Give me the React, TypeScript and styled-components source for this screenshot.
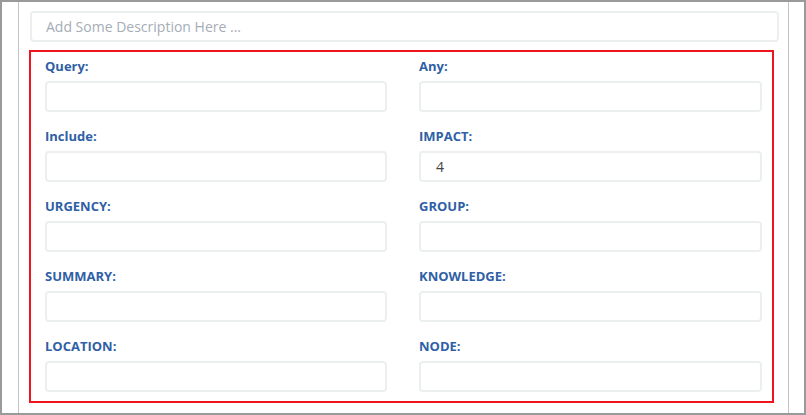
import styled, { createGlobalStyle } from "styled-components";

const GlobalStyle = createGlobalStyle`
    html, body {
        margin: 0;
        padding: 0;
        background: #ffffff;
    }
    * {
        box-sizing: border-box;
    }
`

const Frame = styled.div`
    width: 806px;
    height: 415px;
    border: 2px solid #9a9a9a;
    padding-left: 16px;
    padding-right: 15px;
    background: #ffffff;
    overflow: hidden;
    font-family: "Open Sans", "Liberation Sans", sans-serif;
`

const Panel = styled.div`
    height: 100%;
    border-left: 1px solid #c4c4c4;
    border-right: 1px solid #c4c4c4;
    padding: 0 10px 0 10px;
    display: flex;
    flex-direction: column;
`

// label of the description box, scrolled mostly out of view
const CutLabel = styled.div`
    height: 8px;
    margin-top: -17px;
    margin-left: 2px;
    font-size: 13px;
    font-weight: 700;
    line-height: 16px;
    color: #2f3b4a;
`

const DescriptionInput = styled.input`
    height: 31px;
    width: 100%;
    margin-top: 18px;
    margin-left: 1px;
    border: 2px solid #eceff0;
    border-radius: 4px;
    padding: 0 14px;
    font-family: "Open Sans", "Liberation Sans", sans-serif;
    font-size: 14px;
    color: #444;
    outline: none;

    &::placeholder {
        color: #a5adb6;
    }
`

const RedBox = styled.div`
    margin-top: 8px;
    margin-right: 4px;
    border: 2px solid #f0141e;
    padding: 6px 9px 9px 14px;
    display: grid;
    grid-template-columns: 342px 343px;
    column-gap: 32px;
    row-gap: 16px;
`

const Field = styled.div`
    display: flex;
    flex-direction: column;
`

const Label = styled.label`
    font-size: 13px;
    font-weight: 700;
    line-height: 16px;
    color: #2f5fa6;
    margin-bottom: 7px;
`

const TextInput = styled.input`
    height: 31px;
    width: 100%;
    border: 2px solid #eceff0;
    border-radius: 4px;
    padding: 0 15px;
    font-family: "Open Sans", "Liberation Sans", sans-serif;
    font-size: 14px;
    color: #444;
    background: #ffffff;
    outline: none;
`

const fields: { label: string; value?: string }[] = [
    { label: "Query:" },
    { label: "Any:" },
    { label: "Include:" },
    { label: "IMPACT:", value: "4" },
    { label: "URGENCY:" },
    { label: "GROUP:" },
    { label: "SUMMARY:" },
    { label: "KNOWLEDGE:" },
    { label: "LOCATION:" },
    { label: "NODE:" },
]

const App = () => {
    return (
        <>
            <GlobalStyle />
            <Frame>
                <Panel>
                    <CutLabel>Description:</CutLabel>
                    <DescriptionInput placeholder="Add Some Description Here ..." />
                    <RedBox>
                        {fields.map(f => (
                            <Field key={f.label}>
                                <Label>{f.label}</Label>
                                <TextInput defaultValue={f.value ?? ""} />
                            </Field>
                        ))}
                    </RedBox>
                </Panel>
            </Frame>
        </>
    )
}

export default App;
